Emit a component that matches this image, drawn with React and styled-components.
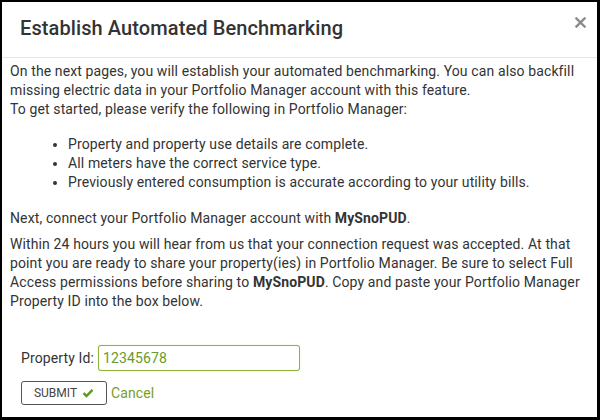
import styled, { createGlobalStyle } from "styled-components";

const Global = createGlobalStyle`
  html, body {
    margin: 0;
    padding: 0;
    background: #000;
  }
  * {
    box-sizing: border-box;
  }
`;

const Modal = styled.div`
  width: 600px;
  height: 420px;
  background: #fff;
  border-style: solid;
  border-color: #000;
  border-width: 2px 3px 3px 2px;
  font-family: Roboto, "Liberation Sans", Arial, sans-serif;
  color: #333;
  display: flex;
  flex-direction: column;
`;

const Header = styled.div`
  height: 56px;
  display: flex;
  align-items: center;
  justify-content: space-between;
  padding: 0 11px 4px 18px;
  border-bottom: 1px solid #e5e5e5;
`;

const Title = styled.h2`
  margin: 0;
  font-size: 20px;
  font-weight: 500;
  color: #333;
  letter-spacing: 0.1px;
`;

const Close = styled.button`
  border: 0;
  background: none;
  padding: 0;
  margin-top: -10px;
  cursor: pointer;
  display: flex;
  color: #8a8a8a;
`;

const Body = styled.div`
  padding: 4px 10px 0 8px;
  font-size: 14px;
  line-height: 19px;
  letter-spacing: 0.12px;
`;

const Para = styled.p`
  margin: ${(p) => p.$margin || "0"};
`;

const List = styled.ul`
  margin: 16px 0 17px;
  padding-left: 58px;
`;

const Form = styled.div`
  padding: 34px 0 0 11px;
  display: flex;
  flex-direction: column;
  gap: 10px;
`;

const Row = styled.div`
  display: flex;
  align-items: center;
  gap: ${(p) => p.$gap || "4px"};
`;

const Label = styled.label`
  font-size: 14px;
  color: #333;
`;

const Input = styled.input`
  width: 202px;
  height: 26px;
  border: 1px solid #8cb43a;
  border-radius: 3px;
  padding: 0 4px;
  font-family: inherit;
  font-size: 14px;
  letter-spacing: inherit;
  color: #6a9a2a;
  outline: none;
  box-shadow: 0 0 1px #b3d06a;
`;

const SubmitButton = styled.button`
  height: 24px;
  width: 86px;
  border: 1px solid #555;
  border-radius: 3px;
  background: #fff;
  font-family: inherit;
  font-size: 12px;
  color: #444;
  display: flex;
  align-items: center;
  justify-content: center;
  gap: 5px;
  padding: 0;
`;

const Cancel = styled.a`
  color: #7a9e22;
  font-size: 14px;
  text-decoration: none;
`;

export default function App() {
  return (
    <>
      <Global />
      <Modal>
        <Header>
          <Title>Establish Automated Benchmarking</Title>
          <Close aria-label="Close">
            <svg width="11" height="11" viewBox="0 0 11 11">
              <path d="M1.5 1.5 L9.5 9.5 M9.5 1.5 L1.5 9.5" stroke="currentColor" strokeWidth="2.4" strokeLinecap="square" />
            </svg>
          </Close>
        </Header>
        <Body>
          <Para>
            On the next pages, you will establish your automated benchmarking. You can also backfill
            missing electric data in your Portfolio Manager account with this feature.
            <br />
            To get started, please verify the following in Portfolio Manager:
          </Para>
          <List>
            <li>Property and property use details are complete.</li>
            <li>All meters have the correct service type.</li>
            <li>Previously entered consumption is accurate according to your utility bills.</li>
          </List>
          <Para $margin="0 0 7px">
            Next, connect your Portfolio Manager account with <b>MySnoPUD</b>.
          </Para>
          <Para>
            Within 24 hours you will hear from us that your connection request was accepted. At that
            point you are ready to share your property(ies) in Portfolio Manager. Be sure to select Full
            Access permissions before sharing to <b>MySnoPUD</b>. Copy and paste your Portfolio Manager
            Property ID into the box below.
          </Para>
          <Form>
            <Row>
              <Label>Property Id:</Label>
              <Input defaultValue="12345678" />
            </Row>
            <Row $gap="4px">
              <SubmitButton>
                SUBMIT
                <svg width="12" height="10" viewBox="0 0 12 10">
                  <path d="M1.5 5.2 L4.5 8 L10.5 1.8" fill="none" stroke="#5e9a1e" strokeWidth="2.4" />
                </svg>
              </SubmitButton>
              <Cancel href="#">Cancel</Cancel>
            </Row>
          </Form>
        </Body>
      </Modal>
    </>
  );
}
